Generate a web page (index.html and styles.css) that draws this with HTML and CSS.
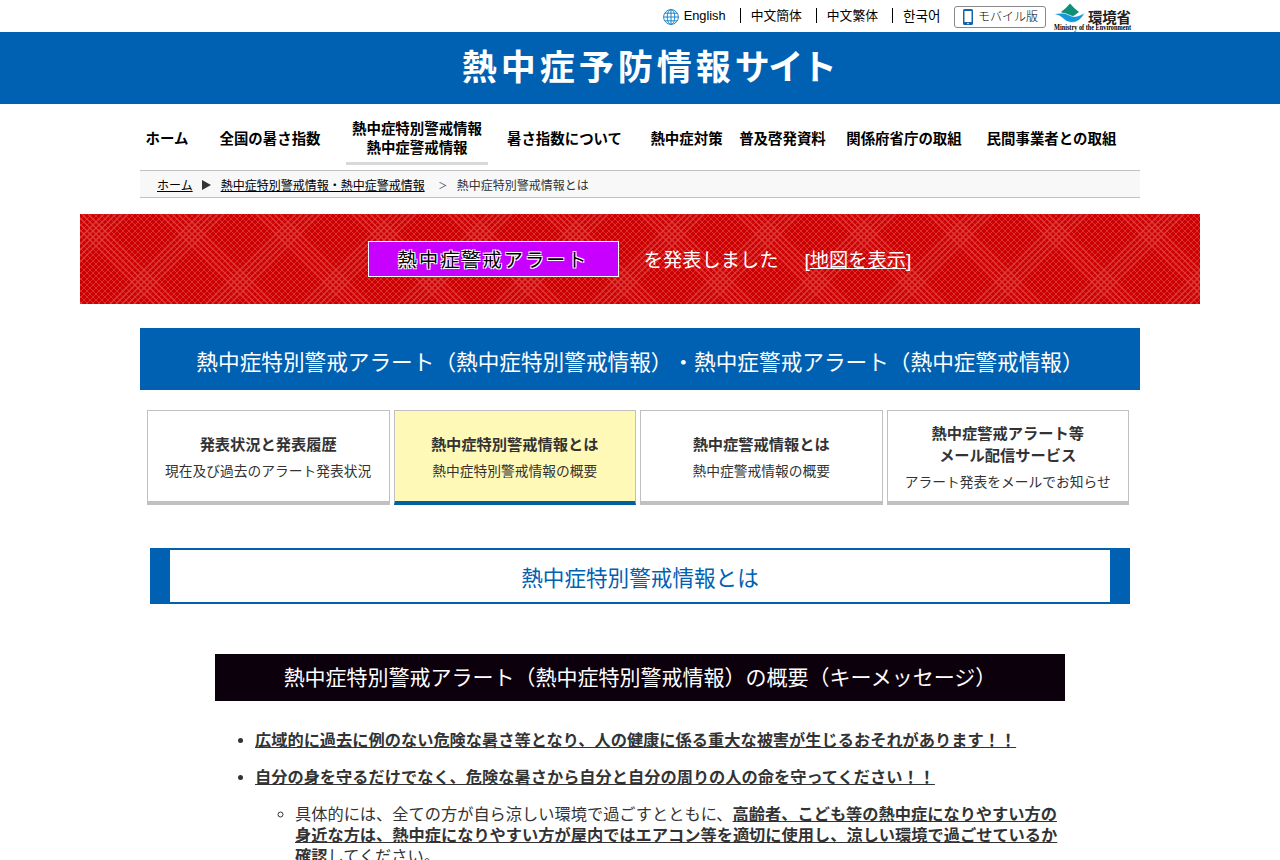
FILE: index.html
```html
<!DOCTYPE html>
<html lang="ja">

<head>
    <meta charset="UTF-8">
    <meta name="viewport" content="width=device-width, initial-scale=1.0">
    <title>熱中症予防情報サイト</title>
    <link rel="stylesheet" href="styles.css">
</head>

<body>
    <header>
        <div class="header-top">
            <ul class="lang">
                <li>
                    <svg class="globe" width="16" height="16" viewBox="0 0 16 16" fill="none" stroke="#1f86c9">
                        <circle cx="8" cy="8" r="7.4" />
                        <ellipse cx="8" cy="8" rx="3.8" ry="7.4" />
                        <path d="M8 .7v14.6M.7 8h14.6M2 4.2h12M2 11.8h12" />
                    </svg>
                    <a href="#">English</a>
                </li>
                <li><a href="#">中文簡体</a></li>
                <li><a href="#">中文繁体</a></li>
                <li><a href="#" class="ko" lang="ko">한국어</a></li>
            </ul>
            <a href="#" class="mobile">
                <svg width="12" height="18" viewBox="0 0 12 18">
                    <rect x="1" y="1" width="10" height="16" rx="1.5" fill="#1565a8" />
                    <rect x="2.5" y="3" width="7" height="11" fill="#fff" />
                    <circle cx="6" cy="15.5" r=".8" fill="#fff" />
                </svg>
                モバイル版
            </a>
            <a href="#" class="moe">
                <svg width="78" height="29" viewBox="0 0 78 29">
                    <path d="M16 .5Q20 5.500 25 9Q20 12 16 17Q12 12 7 9Q12 5.500 16 .5z" fill="#0d9076" />
                    <path d="M0 11.500Q9 8.500 15 12Q21 16 31 9.500Q26 20 17 19.500Q12 19 9 15.500Q6 12 0 11.500z" fill="#1597dc" stroke="#fff" stroke-width=".7" />
                    <text class="moe-ja" x="34" y="19.500" textLength="43">環境省</text>
                    <text class="moe-en" x="0" y="27" textLength="77" lengthAdjust="spacingAndGlyphs">Ministry of the Environment</text>
                </svg>
            </a>
        </div>
        <div class="site-title">熱中症予防情報<span>サイト</span></div>
    </header>

    <div class="container">
        <nav class="gnav">
            <a href="#">ホーム</a>
            <a href="#">全国の暑さ指数</a>
            <a href="#" class="current">熱中症特別警戒情報<br>熱中症警戒情報</a>
            <a href="#">暑さ指数について</a>
            <a href="#">熱中症対策</a>
            <a href="#">普及啓発資料</a>
            <a href="#">関係府省庁の取組</a>
            <a href="#">民間事業者との取組</a>
        </nav>
        <div class="breadcrumb">
            <a href="#">ホーム</a>
            <span class="arrow"></span>
            <a href="#">熱中症特別警戒情報・熱中症警戒情報</a>
            <span class="gt">＞</span>
            <span>熱中症特別警戒情報とは</span>
        </div>
    </div>

    <div class="alert">
        <svg class="alert-bg" width="1120" height="90">
            <defs>
                <!-- fine mesh -->
                <pattern id="mesh" width="6" height="6" x="4" y="2" patternUnits="userSpaceOnUse">
                    <path d="M-1-1L7 7M7-1L-1 7" stroke="#dc2e2e" stroke-width="1" />
                </pattern>
                <!-- diagonal bands -->
                <pattern id="bands" width="96" height="96" x="16" y="20" patternUnits="userSpaceOnUse">
                    <g stroke="#e04040" stroke-opacity=".6" stroke-width="1.8">
                        <path d="M-16-4L88 100M-10-4L94 100M-4-4L100 100M2-4L106 100M8-4L112 100M-4 80L16 100M-4 86L10 100M80-4L100 16M86-4L100 10" />
                        <path d="M112-4L8 100M106-4L2 100M100-4L-4 100M94-4L-10 100M88-4L-16 100M10-4L-4 10M16-4L-4 16M100 80L80 100M100 86L86 100" />
                    </g>
                </pattern>
            </defs>
            <rect width="1120" height="90" fill="url(#mesh)" />
            <rect width="1120" height="90" fill="url(#bands)" />
        </svg>
        <span class="alert-label">熱中症警戒アラート</span>
        <span class="alert-text">を発表しました</span>
        <span class="alert-link">[<a href="#">地図を表示</a>]</span>
    </div>

    <main class="container">
        <h1>熱中症特別警戒アラート（熱中症特別警戒情報）・熱中症警戒アラート（熱中症警戒情報）</h1>
        <div class="tabs">
            <a href="#" class="tab">
                <strong>発表状況と発表履歴</strong>
                <span>現在及び過去のアラート発表状況</span>
            </a>
            <a href="#" class="tab active">
                <strong>熱中症特別警戒情報とは</strong>
                <span>熱中症特別警戒情報の概要</span>
            </a>
            <a href="#" class="tab">
                <strong>熱中症警戒情報とは</strong>
                <span>熱中症警戒情報の概要</span>
            </a>
            <a href="#" class="tab">
                <strong>熱中症警戒アラート等<br>メール配信サービス</strong>
                <span>アラート発表をメールでお知らせ</span>
            </a>
        </div>

        <h2>熱中症特別警戒情報とは</h2>

        <section class="message">
            <h3>熱中症特別警戒アラート（熱中症特別警戒情報）の概要（キーメッセージ）</h3>
            <ul>
                <li><b>広域的に過去に例のない危険な暑さ等となり、人の健康に係る重大な被害が生じるおそれがあります！！</b></li>
                <li><b>自分の身を守るだけでなく、危険な暑さから自分と自分の周りの人の命を守ってください！！</b>
                    <ul>
                        <li>具体的には、全ての方が自ら涼しい環境で過ごすとともに、<b>高齢者、こども等の熱中症になりやすい方の身近な方は、熱中症になりやすい方が屋内ではエアコン等を適切に使用し、涼しい環境で過ごせているか確認</b>してください。</li>
                    </ul>
                </li>
            </ul>
        </section>
    </main>
</body>

</html>
```
FILE: styles.css
```css
* {
    box-sizing: border-box;
}

html {
    height: 100%;
    overflow: hidden;
}

body {
    margin: 0;
    height: 100%;
    overflow: hidden;
    background-color: #fff;
    color: #333;
    font-family: "Liberation Sans", "Noto Sans CJK JP", sans-serif;
    font-size: 16.23px;
    line-height: 21px;
    text-spacing-trim: space-all;
}

a {
    color: inherit;
}

ul {
    margin: 0;
    padding: 0;
}

.container {
    width: 1000px;
    margin: 0 auto;
}

/* header */
.header-top {
    display: flex;
    justify-content: flex-end;
    align-items: flex-start;
    width: 1000px;
    height: 32px;
    margin: 0 auto;
    padding-right: 8px;
}

.lang {
    display: flex;
    margin-top: 8px;
    list-style: none;
    color: #000;
    font-size: 12.8px;
    line-height: 15px;
}

.lang li {
    display: flex;
    align-items: center;
    height: 15px;
    padding: 0 14px 0 10px;
    border-right: 1px solid #000;
}

.lang li:last-child {
    padding-right: 13px;
    border-right: none;
}

.lang a {
    text-decoration: none;
}

.lang .ko {
    font-family: "Noto Sans CJK KR", sans-serif;
    font-size: 13.6px;
    width: 38px;
    white-space: nowrap;
}

.globe {
    margin: 2px 5px 0 0;
}

.mobile {
    display: flex;
    align-items: center;
    width: 92px;
    height: 22px;
    margin: 6px 8px 0 0;
    padding-left: 7px;
    border: 1px solid #888;
    border-radius: 3px;
    color: #000;
    font-size: 12px;
    font-weight: 300;
    text-decoration: none;
    white-space: nowrap;
}

.mobile svg {
    margin-right: 4px;
}

.moe {
    margin-top: 3px;
    height: 29px;
}

.moe svg {
    overflow: visible;
}

.moe-ja {
    font-family: "Noto Sans CJK JP", sans-serif;
    font-size: 14.4px;
    font-weight: bold;
    fill: #222;
}

.moe-en {
    font-family: "Liberation Serif", serif;
    font-size: 7.5px;
    font-weight: bold;
    fill: #000;
}

.site-title {
    height: 72px;
    background-color: #0061b2;
    color: #fff;
    font-size: 35px;
    font-weight: bold;
    letter-spacing: 4px;
    line-height: 71px;
    text-align: center;
    padding-left: 17px;
}

.site-title span {
    letter-spacing: -1.5px;
}

/* global nav */
.gnav {
    display: grid;
    grid-template-columns: 55px 151px 142px 154px 90px 102px 141px 154px;
    height: 66px;
    padding-top: 12px;
    color: #000;
    font-size: 14.45px;
    font-weight: bold;
    line-height: 19px;
    text-align: center;
}

.gnav a {
    display: flex;
    align-items: center;
    justify-content: center;
    height: 49px;
    padding-right: 1px;
    border-bottom: 3px solid transparent;
    text-decoration: none;
    white-space: nowrap;
}

.gnav .current {
    padding: 0 0 1px;
    border-bottom-color: #d9d9d9;
}

.breadcrumb {
    display: flex;
    align-items: center;
    height: 28px;
    padding: 4px 17px 0;
    border-top: 1px solid #c0c0c0;
    border-bottom: 1px solid #c0c0c0;
    background-color: #f8f8f8;
    font-size: 12px;
}

.breadcrumb a {
    color: #000;
}

.arrow {
    margin: -3px 10px 0 9px;
    border-left: 9px solid #333;
    border-top: 5px solid transparent;
    border-bottom: 5px solid transparent;
}

.gt {
    width: 12px;
    margin: 0 8px 0 12px;
    font-size: 9px;
    text-align: center;
}

/* alert banner */
.alert {
    display: flex;
    align-items: center;
    justify-content: center;
    position: relative;
    width: 1120px;
    height: 90px;
    margin: 16px auto 24px;
    padding-right: 1px;
    background-color: #c00;
    color: #fff;
    font-size: 19.25px;
}

.alert-bg {
    position: absolute;
    top: 0;
    left: 0;
}

.alert-label,
.alert-text,
.alert-link {
    position: relative;
}

.alert-label {
    width: 251px;
    height: 36px;
    border: 1px solid #fff;
    background-color: #c800ff;
    color: #000;
    font-size: 19.2px;
    letter-spacing: 2px;
    line-height: 38px;
    text-align: center;
    text-shadow: 1px 1px 0 #fff, -1px 1px 0 #fff, 1px -1px 0 #fff, -1px -1px 0 #fff;
}

.alert-text {
    margin: 0 26px 0 25px;
    padding-top: 3px;
}

.alert-link {
    padding-top: 3px;
}

h1 {
    height: 62px;
    margin: 0 0 20px;
    background-color: #0061b2;
    color: #fff;
    font-size: 21.65px;
    font-weight: normal;
    line-height: 70px;
    text-align: center;
    white-space: nowrap;
}

/* tabs */
.tabs {
    display: grid;
    grid-template-columns: repeat(4, 1fr);
    gap: 4px;
    margin: 0 11px 43px 7px;
}

.tab {
    display: flex;
    flex-direction: column;
    align-items: center;
    justify-content: center;
    height: 95px;
    padding-top: 4px;
    border: 1px solid #c0c0c0;
    border-bottom-width: 4px;
    background-color: #fff;
    text-align: center;
    text-decoration: none;
    white-space: nowrap;
}

.tab strong {
    font-size: 15.25px;
    line-height: 22px;
}

.tab span {
    margin-top: 5px;
    font-size: 13.75px;
}

.tab.active {
    border-bottom-color: #0060a0;
    background-color: #fff9b8;
}

h2 {
    width: 980px;
    height: 56px;
    margin: 0 auto 50px;
    border: 2px solid #0061b2;
    border-width: 2px 20px;
    color: #0061b2;
    font-size: 21.6px;
    font-weight: normal;
    line-height: 58px;
    text-align: center;
}

/* key message */
.message {
    width: 850px;
    margin: 0 auto;
}

.message h3 {
    height: 47px;
    margin: 0 0 29px;
    background-color: #0d000d;
    color: #fff;
    font-size: 21px;
    font-weight: normal;
    line-height: 48px;
    text-align: center;
    white-space: nowrap;
}

.message ul {
    padding-left: 40px;
}

.message li {
    margin-bottom: 16px;
}

.message li ul {
    width: 804px;
    margin-top: 16px;
}

.message b {
    text-decoration: underline;
}
```
